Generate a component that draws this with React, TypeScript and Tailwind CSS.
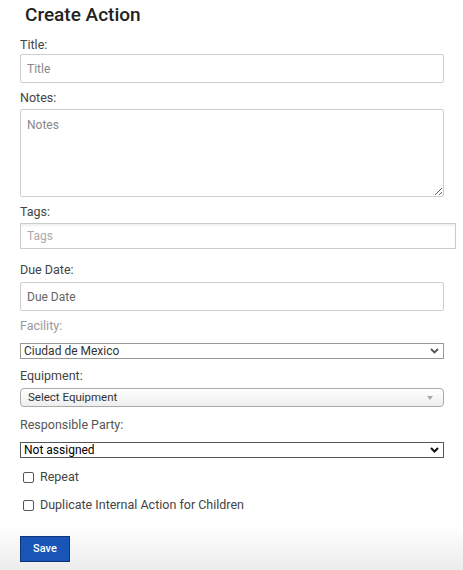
import React from 'react';

export default function App() {
  return (
    <div className="relative h-[570px] w-[463px] overflow-hidden bg-white font-['Roboto',sans-serif] text-[#333]">
      <div className="absolute inset-x-0 bottom-0 h-[44px] bg-gradient-to-b from-white to-[#ececec]" />
      <div className="relative px-[20px]">
        <h1 className="pl-[5px] pt-[4px] text-[19px] font-medium leading-[22px] text-[#222]">Create Action</h1>

        <label className="mt-[12px] block text-[12.5px] leading-[14px] text-[#444]">Title:</label>
        <input
          placeholder="Title"
          className="mt-[2px] block h-[29px] w-[424px] rounded-[2px] border border-[#cfcfcf] px-[6px] text-[12px] placeholder:text-[#888]"
        />

        <label className="mt-[8px] block text-[12.5px] leading-[14px] text-[#444]">Notes:</label>
        <textarea
          placeholder="Notes"
          className="mt-[4px] block h-[88px] w-[424px] resize-y rounded-[2px] border border-[#cfcfcf] px-[6px] py-[6px] text-[12px] placeholder:text-[#888]"
        />

        <label className="mt-[8px] block text-[12.5px] leading-[14px] text-[#444]">Tags:</label>
        <input
          placeholder="Tags"
          className="mt-[4px] block h-[26px] w-[436px] border border-[#cccccc] px-[6px] text-[12px] shadow-[inset_0_2px_2px_rgba(0,0,0,0.06)] placeholder:text-[#aaa]"
        />

        <label className="mt-[14px] block text-[12.5px] leading-[14px] text-[#444]">Due Date:</label>
        <input
          placeholder="Due Date"
          className="mt-[5px] block h-[29px] w-[424px] rounded-[2px] border border-[#cfcfcf] px-[6px] text-[12px] placeholder:text-[#666]"
        />

        <label className="mt-[8px] block text-[12.5px] leading-[14px] text-[#999]">Facility:</label>
        <div className="mt-[10px] flex h-[16px] w-[424px] items-center justify-between border border-[#999] pl-[3px] pr-[4px] text-[12px] leading-none text-[#333]">
          <span>Ciudad de Mexico</span>
          <svg width="9" height="6" viewBox="0 0 9 6" fill="none" stroke="#555" strokeWidth="1.8">
            <path d="M1 1l3.5 3.5L8 1" />
          </svg>
        </div>

        <label className="mt-[10px] block text-[12.5px] leading-[14px] text-[#444]">Equipment:</label>
        <div className="mt-[5px] flex h-[19px] w-[424px] items-center justify-between rounded-[4px] border border-[#aaa] bg-gradient-to-b from-white to-[#eeeeee] pl-[7px] pr-[10px] text-[11.5px] text-[#333]">
          <span>Select Equipment</span>
          <svg width="6" height="4" viewBox="0 0 6 4">
            <path d="M0 0h6L3 4z" fill="#aaa" />
          </svg>
        </div>

        <label className="mt-[11px] block text-[12.5px] leading-[14px] text-[#555]">Responsible Party:</label>
        <div className="mt-[10px] flex h-[16px] w-[424px] items-center justify-between border border-[#555] pl-[3px] pr-[4px] text-[12px] leading-none text-black">
          <span>Not assigned</span>
          <svg width="9" height="6" viewBox="0 0 9 6" fill="none" stroke="#111" strokeWidth="2">
            <path d="M1 1l3.5 3.5L8 1" />
          </svg>
        </div>

        <div className="mt-[11px] flex h-[16px] items-center gap-[6px] pl-[3px] text-[12.5px] text-[#444]">
          <span className="h-[11px] w-[11px] rounded-[2px] border border-[#555]" />
          <span>Repeat</span>
        </div>
        <div className="mt-[12px] flex h-[16px] items-center gap-[6px] pl-[3px] text-[12.5px] text-[#444]">
          <span className="h-[11px] w-[11px] rounded-[2px] border border-[#555]" />
          <span>Duplicate Internal Action for Children</span>
        </div>

        <button className="mt-[23px] flex h-[26px] w-[50px] items-center justify-center border border-[#0e3579] bg-[#1855b6] text-[11px] font-medium text-white">
          Save
        </button>
      </div>
    </div>
  );
}
